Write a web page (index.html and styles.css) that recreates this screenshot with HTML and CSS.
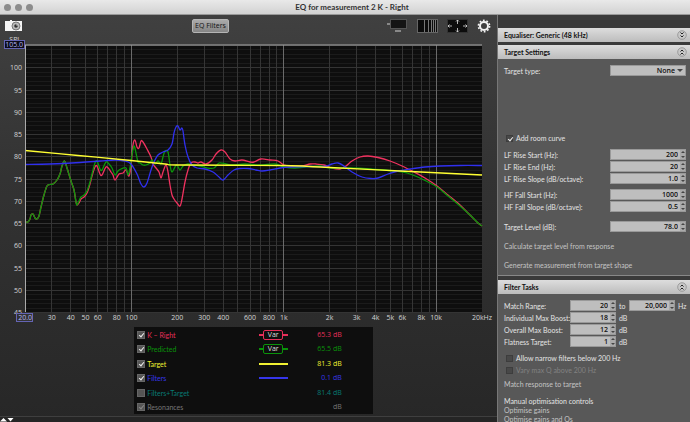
FILE: index.html
```
<!DOCTYPE html>
<html lang="en">
<head>
    <meta charset="UTF-8">
    <title>EQ for measurement 2 K - Right</title>
    <link rel="stylesheet" href="styles.css">
</head>
<body>
    <header class="titlebar">
        <div class="dots"><i></i><i></i><i></i></div>
        <h1>EQ for measurement 2 K - Right</h1>
    </header>
    <div class="workspace">
        <main class="graph">
            <div class="toolbar">
                <button class="icon" aria-label="Capture">
                    <svg width="18" height="12" viewBox="0 0 18 12">
                        <path d="M0 1h5v-1h2v1h10v10H0z" fill="#f4f4f4"/>
                        <circle cx="11" cy="6" r="4" fill="#bbb" stroke="#777"/>
                        <circle cx="11" cy="6" r="1.8" fill="#333"/>
                        <circle cx="12" cy="5" r=".7" fill="#ddd"/>
                    </svg>
                </button>
                <button class="eq-btn">EQ Filters</button>
                <div class="tools">
                    <button class="icon" aria-label="Scrollbars">
                        <svg width="22" height="14" viewBox="0 0 22 14">
                            <path d="M0 4h3v2H0zM8 11h6v2H8z" fill="#888"/>
                            <rect x="3.5" y=".5" width="16" height="9" fill="#141414" stroke="#555"/>
                        </svg>
                    </button>
                    <button class="icon" aria-label="Frequency axis">
                        <svg width="22" height="14" viewBox="0 0 22 14">
                            <rect x=".5" y=".5" width="20" height="13" fill="#0c0c0c" stroke="#666"/>
                            <path d="M7.500 1v12M11.500 1v12M14.500 1v12M16.500 1v12M18.500 1v12" stroke="#777"/>
                        </svg>
                    </button>
                    <button class="icon" aria-label="Graph limits">
                        <svg width="22" height="14" viewBox="0 0 22 14">
                            <rect x=".5" y=".5" width="20" height="13" fill="#0c0c0c" stroke="#333"/>
                            <path d="M10.500 5V1M9 2.500L10.500 1L12 2.500M10.500 9v4M9 11.500L10.500 13L12 11.500M5 7H1M2.500 5.500L1 7L2.500 8.500M16 7h4M18.500 5.500L20 7L18.500 8.500" stroke="#ddd" stroke-width=".8" fill="none"/>
                        </svg>
                    </button>
                    <button class="icon" aria-label="Controls">
                        <svg width="14" height="14" viewBox="0 0 14 14" fill="none" stroke="#f2f2f2">
                            <circle cx="7" cy="7" r="4" stroke-width="2"/>
                            <circle cx="7" cy="7" r="5.600" stroke-width="1.600" stroke-dasharray="1.760 1.758"/>
                        </svg>
                    </button>
                </div>
            </div>

            <svg class="chart" viewBox="0 35 497 290" role="img" aria-label="SPL against frequency">
                <text x="21" y="42" class="spl">SPL</text>
                <rect x="25" y="45" width="457" height="267" fill="#0e0e0e"/>
                <g id="grid"></g>
                <g id="traces"></g>
                <path d="M25.500 312V45M25 45h457" class="frame"/>
                <g id="labels"></g>
                <rect x="4.500" y="40.500" width="20" height="8" class="limit dark"/>
                <text x="23" y="47" class="limit-text">105.0</text>
                <rect x="16.500" y="313.500" width="16" height="8" class="limit"/>
                <text x="32" y="320" class="limit-text">20.0</text>
            </svg>

            <div class="legend">
                <div class="trace red">
                    <label><input type="checkbox" checked>K – Right</label>
                    <span class="line"><b>Var</b></span>
                    <output>65.3 dB</output>
                </div>
                <div class="trace green">
                    <label><input type="checkbox" checked>Predicted</label>
                    <span class="line"><b>Var</b></span>
                    <output>65.5 dB</output>
                </div>
                <div class="trace yellow">
                    <label><input type="checkbox" checked>Target</label>
                    <span class="line"></span>
                    <output>81.3 dB</output>
                </div>
                <div class="trace blue">
                    <label><input type="checkbox" checked>Filters</label>
                    <span class="line"></span>
                    <output>0.1 dB</output>
                </div>
                <div class="trace teal">
                    <label><input type="checkbox">Filters+Target</label>
                    <output>81.4 dB</output>
                </div>
                <div class="trace grey">
                    <label><input type="checkbox" checked disabled>Resonances</label>
                    <output>dB</output>
                </div>
            </div>
            <div class="split">
                <svg width="14" height="5" viewBox="0 0 14 5"><path d="M0 4.500L3.500 1L7 4.500zM7.500 1h6L10.500 4.500z" fill="#fff"/></svg>
            </div>
        </main>

        <aside class="side">
            <section class="panel">
                <h2>Equaliser: Generic (48 kHz)
                    <button class="fold" aria-label="Expand"><svg width="10" height="10" viewBox="0 0 10 10"><circle cx="5" cy="5" r="4.300"/><path d="M3.500 2.500L5 4L6.500 2.500M3.500 5.500L5 7L6.500 5.500"/></svg></button>
                </h2>
            </section>

            <section class="panel settings">
                <h2>Target Settings
                    <button class="fold" aria-label="Collapse"><svg width="10" height="10" viewBox="0 0 10 10"><circle cx="5" cy="5" r="4.300"/><path d="M3.500 4.500L5 3L6.500 4.500M3.500 7.500L5 6L6.500 7.500"/></svg></button>
                </h2>
                <div class="body target">
                    <div class="row type">
                        <label for="type">Target type:</label>
                        <div class="select"><select id="type"><option>None</option></select></div>
                    </div>
                    <label class="check room"><input type="checkbox" checked>Add room curve</label>
                    <div class="row">
                        <label for="lfs">LF Rise Start (Hz):</label>
                        <div class="spin"><input id="lfs" type="text" value="200"><span class="arrows"><button aria-label="Up"></button><button aria-label="Down"></button></span></div>
                    </div>
                    <div class="row">
                        <label for="lfe">LF Rise End (Hz):</label>
                        <div class="spin"><input id="lfe" type="text" value="20"><span class="arrows"><button aria-label="Up"></button><button aria-label="Down"></button></span></div>
                    </div>
                    <div class="row">
                        <label for="lfo">LF Rise Slope (dB/octave):</label>
                        <div class="spin"><input id="lfo" type="text" value="1.0"><span class="arrows"><button aria-label="Up"></button><button aria-label="Down"></button></span></div>
                    </div>
                    <div class="row gap">
                        <label for="hfs">HF Fall Start (Hz):</label>
                        <div class="spin"><input id="hfs" type="text" value="1000"><span class="arrows"><button aria-label="Up"></button><button aria-label="Down"></button></span></div>
                    </div>
                    <div class="row">
                        <label for="hfo">HF Fall Slope (dB/octave):</label>
                        <div class="spin"><input id="hfo" type="text" value="0.5"><span class="arrows"><button aria-label="Up"></button><button aria-label="Down"></button></span></div>
                    </div>
                    <div class="row level">
                        <label for="lvl">Target Level (dB):</label>
                        <div class="spin"><input id="lvl" type="text" value="78.0"><span class="arrows"><button aria-label="Up"></button><button aria-label="Down"></button></span></div>
                    </div>
                    <button class="action">Calculate target level from response</button>
                    <button class="action">Generate measurement from target shape</button>
                </div>
            </section>

            <section class="panel tasks">
                <h2>Filter Tasks
                    <button class="fold" aria-label="Collapse"><svg width="10" height="10" viewBox="0 0 10 10"><circle cx="5" cy="5" r="4.300"/><path d="M3.500 4.500L5 3L6.500 4.500M3.500 7.500L5 6L6.500 7.500"/></svg></button>
                </h2>
                <div class="body filter">
                    <div class="task">
                        <label for="from">Match Range:</label>
                        <div class="spin"><input id="from" type="text" value="20"><span class="arrows"><button aria-label="Up"></button><button aria-label="Down"></button></span></div>
                        <label for="to">to</label>
                        <div class="spin"><input id="to" type="text" value="20,000"><span class="arrows"><button aria-label="Up"></button><button aria-label="Down"></button></span></div>
                        <span>Hz</span>
                    </div>
                    <div class="task">
                        <label for="ind">Individual Max Boost:</label>
                        <div class="spin"><input id="ind" type="text" value="18"><span class="arrows"><button aria-label="Up"></button><button aria-label="Down"></button></span></div>
                        <span>dB</span>
                    </div>
                    <div class="task">
                        <label for="all">Overall Max Boost:</label>
                        <div class="spin"><input id="all" type="text" value="12"><span class="arrows"><button aria-label="Up"></button><button aria-label="Down"></button></span></div>
                        <span>dB</span>
                    </div>
                    <div class="task">
                        <label for="flat">Flatness Target:</label>
                        <div class="spin"><input id="flat" type="text" value="1"><span class="arrows"><button aria-label="Up"></button><button aria-label="Down"></button></span></div>
                        <span>dB</span>
                    </div>
                    <label class="check narrow"><input type="checkbox">Allow narrow filters below 200 Hz</label>
                    <label class="check off"><input type="checkbox" disabled>Vary max Q above 200 Hz</label>
                    <button class="action match">Match response to target</button>
                    <h3>Manual optimisation controls</h3>
                    <button class="action tight">Optimise gains</button>
                    <button class="action tight">Optimise gains and Qs</button>
                </div>
            </section>
        </aside>
    </div>
    <script src="chart.js"></script>
</body>
</html>
```
FILE: chart.js
```
var NS = "http://www.w3.org/2000/svg";
var LEFT = 25, RIGHT = 482, TOP = 45, BOTTOM = 312;
var grid = document.getElementById("grid");
var labels = document.getElementById("labels");
var traces = document.getElementById("traces");

function add(parent, name, attrs, text) {
    var el = document.createElementNS(NS, name);
    for (var k in attrs) {
        el.setAttribute(k, attrs[k]);
    }
    if (text) {
        el.textContent = text;
    }
    parent.appendChild(el);
}

function xOf(hz) {
    return LEFT + (RIGHT - LEFT) * Math.log10(hz / 20) / 3;
}

function yOf(db) {
    return BOTTOM - (db - 45) * (BOTTOM - TOP) / 60;
}

// horizontal lines, one per dB, stronger every 5 dB
for (var db = 45; db <= 105; db++) {
    var y = Math.round(yOf(db)) + 0.5;
    add(grid, "path", {d: "M25 " + y + "H482", "class": db % 5 ? "minor" : "major"});
    if (db % 5 == 0 && db < 105) {
        add(labels, "text", {x: 22, y: yOf(db) + 3, "class": "db"}, String(db));
    }
}

// vertical lines, log scale
[10, 100, 1000, 10000].forEach(function (decade) {
    for (var n = 1; n < 10; n++) {
        var hz = n * decade;
        if (hz > 20 && hz < 20000) {
            var x = Math.floor(xOf(hz)) + 0.5;
            add(grid, "path", {d: "M" + x + " 45V312", "class": n == 1 ? "decade" : "vert"});
        }
    }
});

var ticks = [[30, "30"], [40, "40"], [50, "50"], [60, "60"], [80, "80"], [100, "100"],
    [200, "200"], [300, "300"], [400, "400"], [600, "600"], [800, "800"], [1000, "1k"],
    [2000, "2k"], [3000, "3k"], [4000, "4k"], [5000, "5k"], [6000, "6k"], [8000, "8k"],
    [10000, "10k"], [20000, "20kHz"]];
ticks.forEach(function (t) {
    add(labels, "text", {x: xOf(t[0]), y: 320, "class": "hz"}, t[1]);
});

// smooth curve through the points
function curve(p) {
    var n = p.length / 2;
    function at(i) {
        i = Math.max(0, Math.min(n - 1, i));
        return [p[i * 2], p[i * 2 + 1]];
    }
    var d = "M" + at(0);
    for (var i = 0; i < n - 1; i++) {
        var a = at(i - 1), b = at(i), c = at(i + 1), e = at(i + 2);
        d += "C" + [b[0] + (c[0] - a[0]) / 6, b[1] + (c[1] - a[1]) / 6,
            c[0] - (e[0] - b[0]) / 6, c[1] - (e[1] - b[1]) / 6, c[0], c[1]].join(" ");
    }
    return d;
}

var low = [25, 222, 28, 222, 30, 219, 31, 215, 33, 214, 35, 218, 37, 219, 39, 216, 41, 207,
    44, 195, 47, 186, 50, 184.5, 53, 184, 57, 180, 60, 174, 62, 166, 64.5, 161, 67, 168,
    71, 181, 74, 190, 76, 202, 77, 205];

var right = low.concat([79, 203, 81, 199, 84, 197, 87, 193, 90, 184, 92, 176, 95, 167, 97, 166,
    100, 174, 102, 175, 106, 167, 109, 169, 111, 172, 113, 175, 115, 180, 119, 174, 123, 173,
    126, 170, 129, 176, 131, 165, 133, 145, 135, 140, 137, 147, 139, 148, 141, 141, 143, 142,
    147, 149, 151, 157, 153, 164, 156, 168, 159, 172, 161, 178, 163, 172, 166, 165, 168, 172,
    170, 185, 172, 195, 174, 199, 177, 203, 180, 206, 182, 199, 185, 182, 188, 170, 191, 163,
    195, 162, 198, 163, 201, 162, 206, 164, 212, 160, 216, 154, 221, 150, 225, 152, 230, 159,
    235, 161, 242, 160, 250, 162, 254, 162, 261, 159, 270, 160, 278, 161, 284, 165, 292, 166,
    302, 166, 310, 164, 316, 164, 324, 165, 332, 168, 340, 169, 346, 166, 352, 161, 360, 157,
    368, 156, 378, 157.5, 390, 161, 402, 166, 414, 172, 425, 178, 437, 186, 448, 195,
    460, 205, 470, 215, 478, 223, 482, 226]);

var predicted = low.concat([79, 201, 81, 197, 84, 195, 87, 191, 90, 182, 92, 174, 95, 163,
    97, 161, 100, 169, 102, 170, 106, 162, 109, 164, 112, 168, 115, 175, 118, 171, 121, 169,
    126, 168, 128, 175, 130, 168, 132, 155, 134, 146, 136, 153, 138, 162, 140, 163, 143, 165,
    146, 165, 150, 163, 152, 160, 155, 164, 158, 161, 161, 164, 163, 157, 165, 151, 168, 152,
    170, 165, 172, 172, 175, 167, 177, 165, 180, 170, 183, 166, 188, 164, 192, 165, 200, 166,
    207, 168, 214, 168, 219, 163, 226, 164, 232, 165, 245, 164, 260, 165, 275, 164, 284, 167,
    295, 168, 305, 167, 320, 166, 330, 168, 350, 168, 370, 169, 400, 171.5, 410, 174,
    422, 179, 437, 187, 448, 196, 460, 206, 470, 215, 478, 223, 482, 226]);

var filters = [25, 164.5, 50, 164, 80, 162.5, 100, 161, 115, 160, 125, 161, 131, 164, 137, 174,
    141, 184, 144, 187, 147, 183, 151, 170, 154, 162, 158, 155, 163, 152, 168, 150, 172, 144,
    174, 133, 176, 127, 178, 126, 180, 130, 182, 128, 183, 131, 185, 145, 188, 157, 192, 165,
    197, 168, 205, 169, 213, 172, 219, 177, 223, 180, 228, 175, 234, 170, 240, 168.5,
    248, 168.5, 256, 170, 262, 171, 270, 170, 280, 168, 290, 167, 310, 166.5, 325, 166.5,
    332, 164, 338, 163, 344, 166, 352, 172, 362, 177, 371, 178.5, 378, 178, 388, 174,
    398, 171, 410, 169, 425, 167, 440, 166, 460, 165.5, 482, 165.5];

var target = [25, 150.5, 78, 155.5, 131, 160.5, 165, 164, 180, 165, 284, 165.5, 320, 167, 400, 171, 482, 175];

add(traces, "path", {d: curve(right), "class": "t-red"});
add(traces, "path", {d: curve(predicted), "class": "t-green"});
add(traces, "path", {d: curve(filters), "class": "t-blue"});
add(traces, "path", {d: curve(target), "class": "t-yellow"});
```
FILE: styles.css
```
*{margin: 0;padding: 0;box-sizing: border-box}
body{
    height: 100vh;
    overflow: hidden;
    display: flex;
    flex-direction: column;
    background: #2b2b2b;
    color: #e4e4e4;
    font: 7px/10px "Open Sans", "Noto Sans", sans-serif;
}
button, input, select{
    font: inherit;
    color: inherit;
    border: 0;
    background: none;
}
.titlebar{
    display: grid;
    grid-template-columns: 1fr auto 1fr;
    align-items: center;
    height: 15px;
    padding-left: 4px;
    background: linear-gradient(#e9e9e9, #d2d2d2);
    border-bottom: 1px solid #999;
}
.titlebar h1{
    padding-left: 10px;
    color: #333;
    font: bold 8px/12px Lato, sans-serif;
}
.dots{
    display: flex;
    gap: 4px;
}
.dots i{
    width: 7px;
    height: 7px;
    border-radius: 50%;
    background: #8c8c8c;
}
.workspace{
    flex: 1;
    min-height: 0;
    display: flex;
}
.graph{
    flex: 1;
    min-width: 0;
    display: flex;
    flex-direction: column;
    background: linear-gradient(#404040, #333 40%, #272727);
}
.toolbar{
    display: grid;
    grid-template-columns: 1fr auto 1fr;
    align-items: center;
    height: 20px;
    padding: 2px 6px 0 5px;
}
.icon{
    display: flex;
}
.icon svg, .fold svg{
    display: block;
}
.eq-btn{
    width: 37px;
    height: 14px;
    border-radius: 2px;
    border: 1px solid #b5b5b5;
    background: linear-gradient(#aaa, #858585);
    color: #111;
    margin-right: 75px;
}
.tools{
    display: flex;
    justify-content: flex-end;
    gap: 8px;
}

/* graph */
.chart{
    display: block;
    width: 100%;
}
.chart text{
    fill: #d4d4d4;
    font-size: 7px;
}
.chart .spl, .chart .db, .chart .limit-text{
    text-anchor: end;
}
.chart .hz{
    text-anchor: middle;
}
.chart .limit-text{
    fill: #b5b5f0;
}
.chart path{
    fill: none;
}
.minor{stroke: #1b1b1b}
.major{stroke: #343434}
.vert{stroke: #353535}
.decade{stroke: #6a6a6a}
.frame{stroke: #aaa}
.limit{
    fill: #333;
    stroke: #6464b4;
}
.dark{fill: #0b0b18}
.t-red, .t-green, .t-blue, .t-yellow{stroke-width: 1.3px}
.t-red{stroke: #f0325f}
.t-green{stroke: #0a980a}
.t-blue{stroke: #3030ee}
.t-yellow{stroke: #ffff32}

/* legend */
.legend{
    width: 48%;
    margin: 2px auto 0 27%;
    padding: 0 31px 0 3px;
    background: #0e0e0e;
}
.trace{
    display: grid;
    grid-template-columns: 1fr 29px 54px;
    align-items: center;
    height: 15px;
}
.trace:nth-child(2n){height: 14px}
.trace label{
    display: flex;
    align-items: center;
    gap: 2px;
    font-family: Lato, sans-serif;
}
.trace output{
    grid-column: 3;
    text-align: right;
}
.trace .line{
    display: flex;
    justify-content: center;
    align-items: center;
    height: 10px;
    background: linear-gradient(currentColor, currentColor) center / 100% 2px no-repeat;
}
.line b{
    width: 20px;
    height: 10px;
    border: 1px solid;
    border-radius: 2px;
    background: #0e0e0e;
    font-weight: normal;
    line-height: 8px;
    text-align: center;
}
.line b::first-line{color: #ddd}
.red{color: #e62f5a}
.green{color: #0a930a}
.yellow{color: #f0f032}
.blue{color: #3636ea}
.teal{color: #087a74}
.grey{color: #777}

input[type=checkbox]{
    appearance: none;
    width: 8px;
    height: 8px;
    background: #555;
    border: 1px solid #666;
    position: relative;
}
input[type=checkbox]:checked::after{
    content: "";
    position: absolute;
    left: 2px;
    top: 0;
    width: 2px;
    height: 4px;
    border: solid #eee;
    border-width: 0 1px 1px 0;
    transform: rotate(40deg);
}
input[type=checkbox]:disabled::after{border-color: #888}
.split{
    margin-top: auto;
    height: 6px;
    border-top: 1px solid #3f3f3f;
    background: #252525;
}
.split svg{display: block}

/* side panels */
.side{
    width: 193px;
    padding-top: 13px;
    border-left: 1px solid #777;
    background: #3a3a3a;
    font-family: Lato, sans-serif;
}
.panel{margin-bottom: 3px}
.settings{margin-bottom: 4px}
.panel h2{
    display: flex;
    justify-content: space-between;
    align-items: center;
    height: 14px;
    padding: 0 3px 0 6px;
    background: linear-gradient(#ddd, #bcbcbc);
    color: #111;
    font-size: 7px;
    font-weight: 700;
}
.fold svg{
    fill: #c8c8c8;
    stroke: #888;
    stroke-width: .7px;
}
.fold path{
    fill: none;
    stroke: #222;
    stroke-width: 1px;
}
.body{
    background: #585858;
    border-bottom: 1px solid #888;
    padding: 6px 4px 5px 6px;
}
.row{
    display: flex;
    justify-content: space-between;
    align-items: center;
    height: 11px;
    margin-bottom: 1px;
}
.row .spin, .select{width: 76px}
.spin, .select{
    display: flex;
    height: 11px;
    background: #bebebe;
    border: 1px solid #999;
    color: #111;
    font-family: "Open Sans", sans-serif;
}
.spin input{
    flex: 1;
    min-width: 0;
    padding-right: 2px;
    text-align: right;
    font-weight: 600;
}
.arrows{
    width: 5px;
    display: flex;
    flex-direction: column;
    background: #aaa;
}
.arrows button{
    flex: 1;
    display: grid;
    place-items: center;
}
.arrows button::before{
    content: "";
    border: 2px solid transparent;
    border-top-width: 0;
    border-bottom-color: #444;
}
.arrows button + button::before{
    border-width: 2px 2px 0;
    border-top-color: #444;
}
.select{position: relative}
.select select{
    appearance: none;
    width: 100%;
    padding-right: 10px;
    text-align: right;
    text-align-last: right;
    font-weight: 600;
}
.select::after{
    content: "";
    position: absolute;
    right: 2px;
    top: 3px;
    border: 3px solid transparent;
    border-top-color: #444;
    border-bottom-width: 0;
}
.check{
    display: flex;
    align-items: center;
    gap: 3px;
    padding-left: 2px;
    height: 12px;
}
.check input[type=checkbox]{
    width: 7px;
    height: 7px;
    background: #484848;
    border-color: #3d3d3d;
}
.room{margin: 56px 0 5px}
.gap{margin-top: 5px}
.level{margin: 9px 0}
.action{
    display: block;
    height: 10px;
    margin-bottom: 9px;
    color: #c4c4c4;
}
.target .action:last-child{margin-bottom: 0}
.task{
    display: grid;
    grid-template-columns: 66px 46px 13px 46px 1fr;
    align-items: center;
    height: 11px;
    margin-bottom: 1px;
    white-space: nowrap;
}
.task > label + .spin + label, .task > span{padding-left: 3px}
.narrow{margin-top: 5px}
.off{color: #828282}
.match{margin: 3px 0 8px}
.body h3{
    font-size: 7px;
    font-weight: 400;
    line-height: 9px;
}
.tight{
    height: 9px;
    line-height: 9px;
    margin: 0;
}
```
